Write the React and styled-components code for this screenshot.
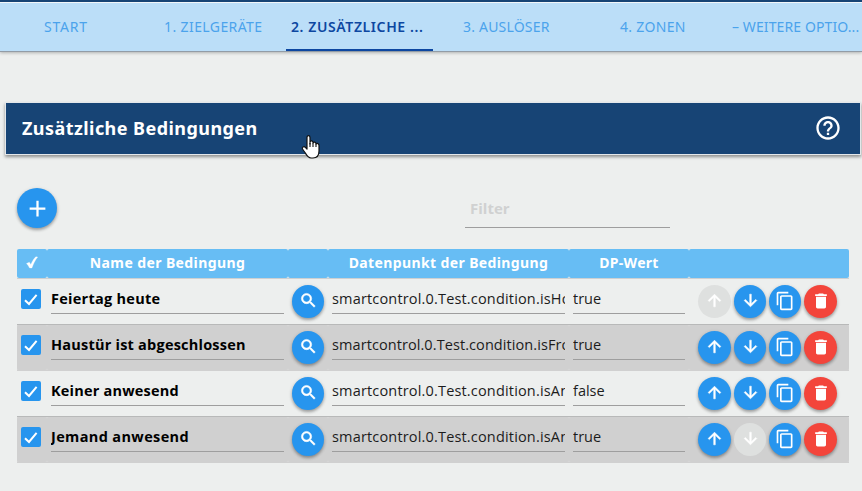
import React from 'react';
import styled, { createGlobalStyle, css } from 'styled-components';
import {
  MdAdd,
  MdSearch,
  MdArrowUpward,
  MdArrowDownward,
  MdContentCopy,
  MdDelete,
  MdHelpOutline,
} from 'react-icons/md';

const GlobalStyle = createGlobalStyle`
  *, *::before, *::after { box-sizing: border-box; }
  body {
    margin: 0;
    background: #edefee;
    font-family: "Open Sans", "Noto Sans", sans-serif;
    overflow: hidden;
  }
`;

const Page = styled.div`
  width: 862px;
  height: 491px;
  overflow: hidden;
  background: #edefee;
  border-top: 2px solid #174475;
`;

const Tabs = styled.nav`
  display: flex;
  height: 50px;
  border-top: 1px solid #f2f6f9;
  border-bottom: 1px solid #929ca6;
  background: #bbdef8;
  box-shadow: 0 1px 3px rgba(0, 0, 0, 0.25);
  overflow: hidden;
`;

const Tab = styled.div`
  flex: 0 0 ${(p) => p.$width || 147}px;
  height: 48px;
  padding-left: ${(p) => p.$pad}px;
  line-height: 48px;
  white-space: nowrap;
  font-family: "Noto Sans", sans-serif;
  font-size: 14px;
  letter-spacing: ${(p) => p.$spacing || 0}px;
  color: #4ba3ec;
  ${(p) =>
    p.$active &&
    css`
      color: #0d47a1;
      font-weight: 600;
      border-bottom: 2px solid #0d47a1;
    `}
`;

const PanelHeader = styled.header`
  display: flex;
  align-items: center;
  justify-content: space-between;
  width: 854px;
  height: 51px;
  margin: 51px 0 0 6px;
  padding: 0 18px 1px 16px;
  background: #174475;
  color: #fff;
  box-shadow: 0 0 0 1px #e3e7ea, 0 2px 3px 1px rgba(0, 0, 0, 0.4);
`;

const Title = styled.h1`
  margin: 0 0 1px;
  font: 700 18px/26px "Noto Sans", sans-serif;
  letter-spacing: ${(p) => p.$spacing}px;
`;

const Toolbar = styled.div`
  display: flex;
  justify-content: space-between;
  height: 41px;
  margin: 34px 192px 0 17px;
`;

const RoundButton = styled.button`
  display: flex;
  flex: none;
  align-items: center;
  justify-content: center;
  width: ${(p) => p.$width || 33}px;
  height: ${(p) => p.$height || 33}px;
  padding: 0 0 ${(p) => (p.$height ? 0 : 2)}px;
  border: 0;
  border-radius: 50%;
  color: #fff;
  background: ${(p) => (p.$danger ? '#f3453b' : '#2795ee')};
  box-shadow: 0 2px 3px rgba(0, 0, 0, 0.28), 0 1px 4px rgba(0, 0, 0, 0.12);
  svg {
    display: block;
    stroke-width: ${(p) => (p.$bold ? 0.7 : 0)};
  }
  svg path[fill='none'] {
    stroke: none;
  }
  &:disabled {
    background: #dee0df;
    box-shadow: none;
  }
`;

const Filter = styled.div`
  width: 205px;
  height: 40px;
  padding-left: 5px;
  border-bottom: 1px solid #9e9e9e;
  color: #d0d1d1;
  font-weight: 700;
  font-size: 15px;
  line-height: 40px;
`;

const Table = styled.section`
  width: 832px;
  margin: 20px 0 0 17px;
`;

const columns = css`
  display: grid;
  grid-template-columns: 30px 241px 40px 241px 120px 160px;
`;

const HeadRow = styled.div`
  ${columns}
  height: 30px;
  border-bottom: 1px solid #cdd0d2;
`;

const HeadCell = styled.div`
  display: flex;
  align-items: center;
  justify-content: center;
  height: 29px;
  padding-bottom: 2px;
  border-radius: 2px;
  background: #67bdf4;
  color: #fff;
  font: 700 14px/20px "Noto Sans", sans-serif;
  letter-spacing: ${(p) => p.$spacing || 0}px;
`;

const Row = styled.div`
  ${columns}
  height: 46px;
  border-bottom: 1px solid ${(p) => (p.$shaded ? '#d0d0d0' : '#b8b9b9')};
  background: ${(p) => (p.$shaded ? '#d8d8d8' : 'transparent')};
`;

const Cell = styled.div`
  height: 45px;
  min-width: 0;
  border-radius: 2px;
  padding: ${(p) => p.$pad || '0 4px'};
  background: ${(p) => (p.$shaded ? '#d0d0d0' : 'transparent')};
`;

const Checkbox = styled.div`
  display: flex;
  align-items: center;
  justify-content: center;
  width: 20px;
  height: 20px;
  border-radius: 2px;
  background: #2795ee;
`;

const Field = styled.div`
  height: 35px;
  border-bottom: 1px solid #9e9e9e;
  overflow: hidden;
  white-space: nowrap;
  color: ${(p) => (p.$bold ? '#000' : '#1c1c1c')};
  font-weight: ${(p) => (p.$bold ? 700 : 400)};
  font-size: 14.5px;
  line-height: 40px;
  letter-spacing: ${(p) => p.$spacing || 0}px;
`;

const Actions = styled.div`
  display: grid;
  grid-template-columns: 36px 35px 35px 33px;
`;

const Pointer = styled.svg`
  position: absolute;
  left: 301px;
  top: 134px;
`;

const Tick = () => (
  <svg width="20" height="20" viewBox="0 0 20 20">
    <path d="M4 11.2 8 15 15.6 5.8" fill="none" stroke="#fff" strokeWidth="2" />
  </svg>
);

const HeadTick = () => (
  <svg width="12" height="13" viewBox="0 0 12 13">
    <path d="M.5 7.5 3.300 6.200 4.800 8.600C6.200 5.300 8 2.400 9.800.8L11.700 1C9 4.300 7.400 7.800 5.900 12H3.600C2.800 10.300 1.600 8.800.5 7.500Z" fill="#fff" stroke="#fff" strokeWidth=".3" />
  </svg>
);

const tabs = [
  { label: 'START', width: 139, pad: 44, spacing: 0.8 },
  { label: '1. ZIELGERÄTE', pad: 25, spacing: 0.4 },
  { label: '2. ZUSÄTZLICHE ...', pad: 5, spacing: 0.6, active: true },
  { label: '3. AUSLÖSER', pad: 30, spacing: 0.2 },
  { label: '4. ZONEN', width: 146, pad: 40, spacing: 0.3 },
  { label: '– WEITERE OPTIO...', pad: 6, spacing: 0.1 },
];

const conditions = [
  { name: 'Feiertag heute', spacing: 0.27, point: 'smartcontrol.0.Test.condition.isHoliday', pointSpacing: 0.17, value: 'true' },
  { name: 'Haustür ist abgeschlossen', spacing: 0.22, point: 'smartcontrol.0.Test.condition.isFrontDoorLocked', pointSpacing: 0.08, value: 'true' },
  { name: 'Keiner anwesend', spacing: 0.2, point: 'smartcontrol.0.Test.condition.isAnyonePresent', pointSpacing: 0.17, value: 'false' },
  { name: 'Jemand anwesend', spacing: 0.36, point: 'smartcontrol.0.Test.condition.isAnyonePresent', pointSpacing: 0.17, value: 'true' },
];

export default function App() {
  return (
    <Page>
      <GlobalStyle />
      <Tabs>
        {tabs.map((t) => (
          <Tab key={t.label} $width={t.width} $pad={t.pad} $spacing={t.spacing} $active={t.active}>
            {t.label}
          </Tab>
        ))}
      </Tabs>
      <PanelHeader>
        <Title $spacing={0.44}>Zusätzliche Bedingungen</Title>
        <MdHelpOutline size={28} />
      </PanelHeader>
      <Toolbar>
        <RoundButton $width={40} $height={40} aria-label="Hinzufügen">
          <MdAdd size={27} />
        </RoundButton>
        <Filter>Filter</Filter>
      </Toolbar>
      <Table>
        <HeadRow>
          <HeadCell><HeadTick /></HeadCell>
          <HeadCell $spacing={0.4}>Name der Bedingung</HeadCell>
          <HeadCell />
          <HeadCell $spacing={0.38}>Datenpunkt der Bedingung</HeadCell>
          <HeadCell $spacing={0.3}>DP-Wert</HeadCell>
          <HeadCell />
        </HeadRow>
        {conditions.map((c, i) => {
          const shaded = i % 2 === 1;
          return (
            <Row key={c.name} $shaded={shaded}>
              <Cell $shaded={shaded} $pad="10px 0 0 4px">
                <Checkbox><Tick /></Checkbox>
              </Cell>
              <Cell $shaded={shaded}><Field $bold $spacing={c.spacing}>{c.name}</Field></Cell>
              <Cell $shaded={shaded} $pad="6px 4px 0">
                <RoundButton $bold $width={32} aria-label="Suchen"><MdSearch size={19} /></RoundButton>
              </Cell>
              <Cell $shaded={shaded}><Field $spacing={c.pointSpacing}>{c.point}</Field></Cell>
              <Cell $shaded={shaded}><Field>{c.value}</Field></Cell>
              <Cell $shaded={shaded} $pad="6px 0 0 9px">
                <Actions>
                  <RoundButton $bold disabled={i === 0} aria-label="Nach oben"><MdArrowUpward size={19} /></RoundButton>
                  <RoundButton $bold $width={32} disabled={i === conditions.length - 1} aria-label="Nach unten"><MdArrowDownward size={19} /></RoundButton>
                  <RoundButton $width={32} aria-label="Kopieren"><MdContentCopy size={20} /></RoundButton>
                  <RoundButton $danger aria-label="Löschen"><MdDelete size={20} /></RoundButton>
                </Actions>
              </Cell>
            </Row>
          );
        })}
      </Table>
      <Pointer width="20" height="26" viewBox="0 0 20 26">
        <path
          d="M6 15V3.500C6 1 9 1 9 3.500V10V8C9.500 6.500 11.500 6.500 12 8.200V9C12.500 7.600 14.500 7.800 15 9.500V10C16 9 18 9.500 18 11.500V17C18 21 16 24 12 24H10C7 24 5.500 21 4 18.500L1.500 15C.7 13 3 12 4.300 13.300Z"
          fill="#fff" stroke="#111" strokeWidth="1.200" strokeLinejoin="round"
        />
        <path d="M9 9v4M12 9v4M15 10v3" stroke="#111" strokeWidth="1.100" />
      </Pointer>
    </Page>
  );
}
